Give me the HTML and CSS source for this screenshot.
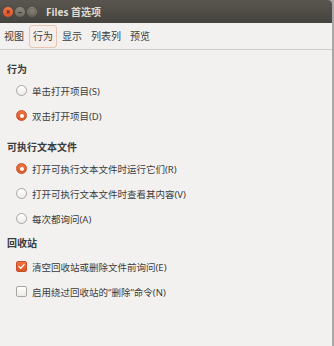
FILE: index.html
```html
<!DOCTYPE html>
<html lang="zh-CN">
<head>
    <meta charset="UTF-8">
    <title>Files 首选项</title>
    <link rel="stylesheet" href="styles.css">
</head>
<body>
<div class="window">
    <div class="titlebar">
        <span class="wbtn close">&#215;</span>
        <span class="wbtn min">&#8211;</span>
        <span class="wbtn max">&#9633;</span>
        <span class="title">Files 首选项</span>
    </div>

    <div class="tabs">
        <span class="tab">视图</span>
        <span class="tab active">行为</span>
        <span class="tab">显示</span>
        <span class="tab">列表列</span>
        <span class="tab">预览</span>
    </div>

    <div class="content">
        <h3 class="first">行为</h3>
        <div class="row"><span class="radio"></span>单击打开项目(S)</div>
        <div class="row"><span class="radio on"></span>双击打开项目(D)</div>

        <h3 class="second">可执行文本文件</h3>
        <div class="row"><span class="radio on"></span>打开可执行文本文件时运行它们(R)</div>
        <div class="row"><span class="radio"></span>打开可执行文本文件时查看其内容(V)</div>
        <div class="row"><span class="radio"></span>每次都询问(A)</div>

        <h3 class="third">回收站</h3>
        <div class="row">
            <span class="check on">
                <svg width="11" height="11" viewBox="0 0 11 11"><path d="M2.5 5.6 L4.6 7.8 L8.6 3.2" fill="none" stroke="#fff" stroke-width="1.6" stroke-linecap="round" stroke-linejoin="round"/></svg>
            </span>清空回收站或删除文件前询问(E)
        </div>
        <div class="row"><span class="check"></span>启用绕过回收站的“删除”命令(N)</div>
    </div>
</div>
</body>
</html>
```

FILE: styles.css
```css
html, body {
    margin: 0;
    height: 100%;
}
body {
    background: #a9a8a6;
    font-family: "Noto Sans", "Noto Sans CJK SC", sans-serif;
    font-size: 9.5px;
    color: #3c3c3c;
}
.window {
    width: 332px;
    height: 346px;
    background: #f2f1f0;
    border-top-right-radius: 4px;
    overflow: hidden;
}
.titlebar {
    height: 23px;
    display: flex;
    align-items: center;
    padding-left: 3px;
    background: linear-gradient(#5a564f, #45433e);
}
.wbtn {
    width: 10px;
    height: 10px;
    border-radius: 50%;
    margin-right: 2px;
    font-size: 8px;
    line-height: 10px;
    text-align: center;
    font-weight: bold;
    color: #3b3a36;
    background: linear-gradient(#8a877f, #6c6a64);
}
.wbtn.close {
    background: linear-gradient(#f0784a, #d9522a);
    color: #5a2a18;
}
.title {
    margin-left: 7px;
    font-weight: bold;
    font-size: 10px;
    color: #dfdbd2;
}
.tabs {
    height: 26px;
    display: flex;
    align-items: center;
    gap: 1px;
    border-bottom: 1px solid #cfccc8;
    font-size: 10px;
}
.tab {
    padding: 2px 3px;
    line-height: 17px;
    border: 1px solid transparent;
    border-radius: 3px;
}
.tab.active {
    border-color: #e9c4b2;
    background: #f6eeea;
}
.content {
    padding: 12px 0 0 7px;
}
h3 {
    margin: 0;
    font-size: 10px;
    line-height: 14px;
    font-weight: bold;
}
h3.second {
    margin-top: 12px;
}
h3.third {
    margin-top: 5px;
}
h3 + .row {
    margin-top: 2px;
}
h3.third + .row {
    margin-top: 4px;
}
.row {
    height: 25px;
    display: flex;
    align-items: center;
    padding-left: 9px;
}
.radio, .check {
    width: 9px;
    height: 9px;
    margin-right: 5px;
    border: 1px solid #a8a59f;
    background: linear-gradient(#ffffff, #ecebe9);
    flex-shrink: 0;
    display: flex;
    align-items: center;
    justify-content: center;
}
.radio {
    border-radius: 50%;
}
.check {
    border-radius: 2px;
}
.radio.on, .check.on {
    border-color: #c9502a;
    background: linear-gradient(#f0743f, #db5728);
}
.radio.on::after {
    content: "";
    width: 4px;
    height: 4px;
    border-radius: 50%;
    background: #fff;
}
.check svg {
    display: block;
}
```
